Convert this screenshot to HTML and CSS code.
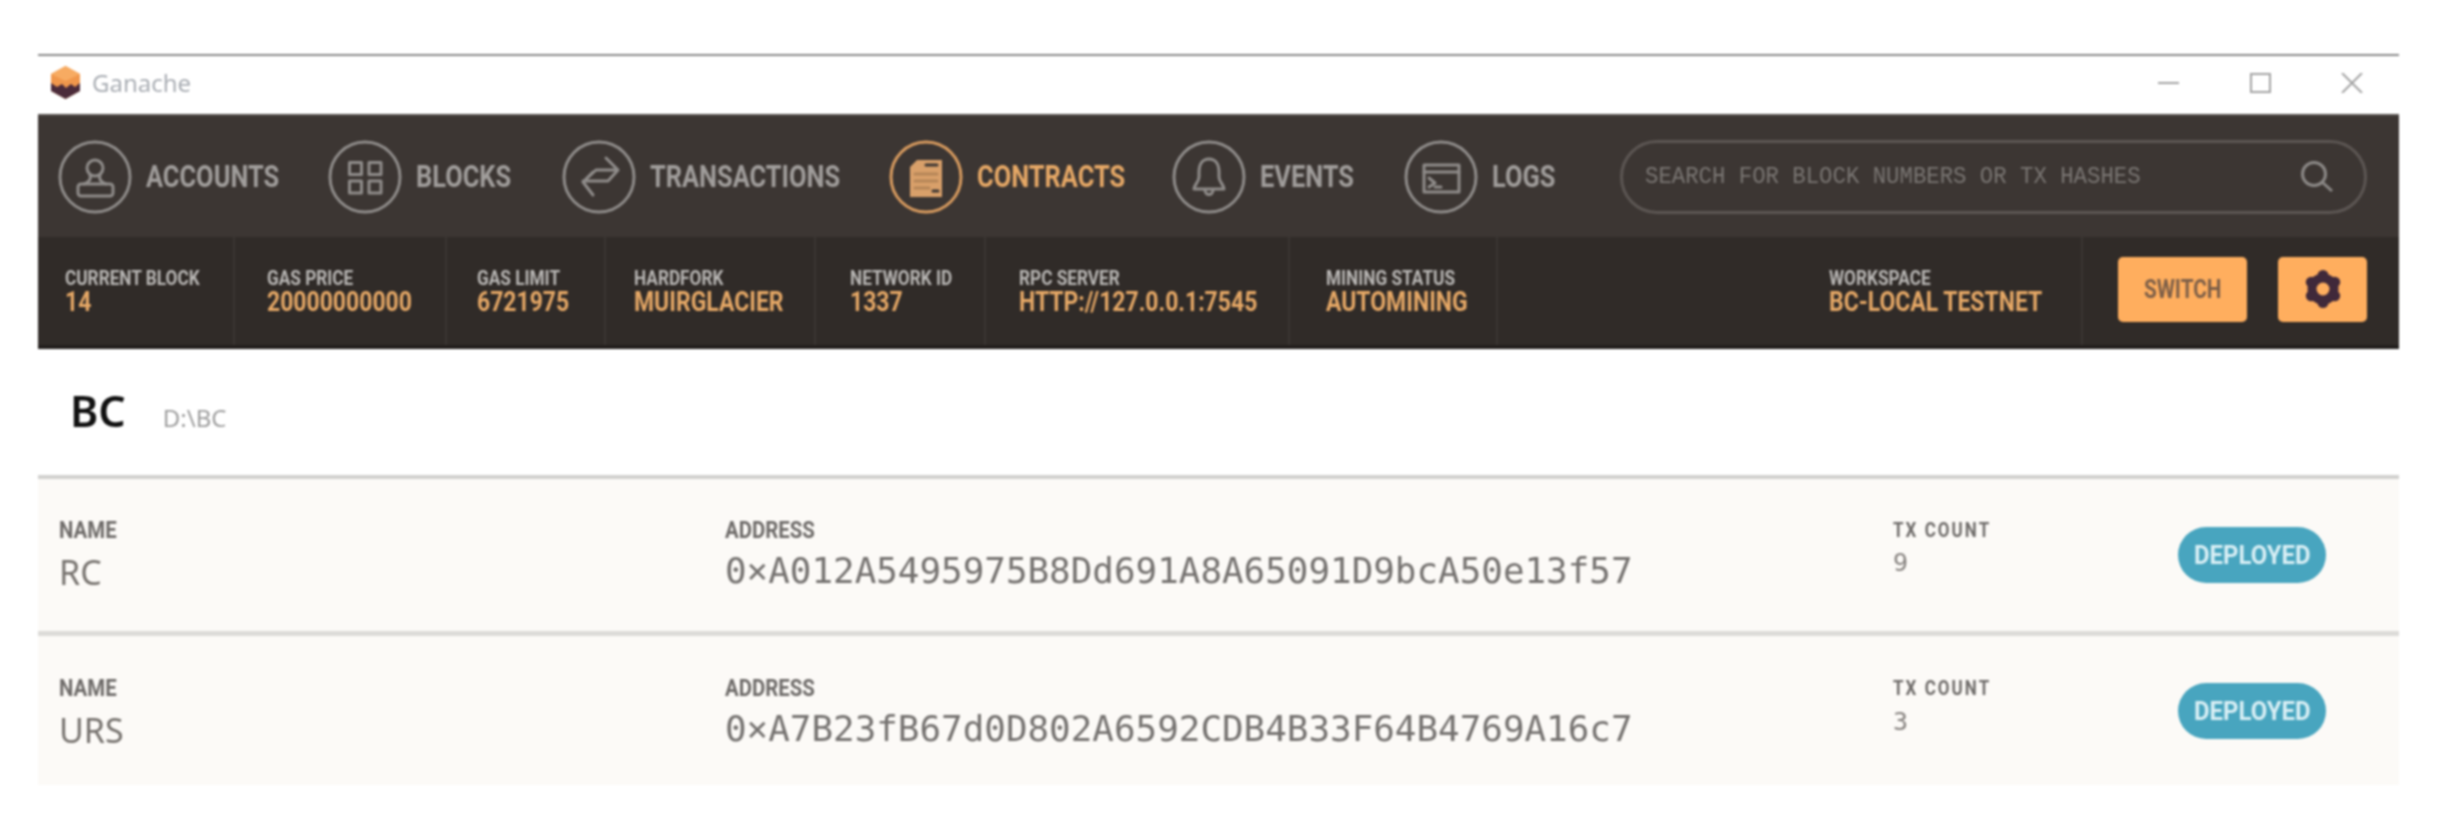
FILE: index.html
```html
<!DOCTYPE html>
<html lang="en">
<head>
    <meta charset="UTF-8">
    <title>Ganache</title>
    <link rel="stylesheet" href="styles.css">
</head>
<body>
    <div class="window">
        <div class="titlebar">
            <svg class="logo" viewBox="0 0 29 33">
                <path d="M14.5 0 L29 8 V25 L14.5 33 L0 25 V8 Z" fill="#f0974c"/>
                <path d="M14.5 0 L29 8 L14.5 15 L0 8 Z" fill="#f7ab62"/>
                <path d="M0 17 L6 21 L11 18 L15 22 L20 18 L24 21 L29 17 V25 L14.5 33 L0 25 Z" fill="#4b2b3a"/>
            </svg>
            <span class="app-name">Ganache</span>
            <div class="win-controls">
                <svg viewBox="0 0 22 20"><path d="M0 10 H21"/></svg>
                <svg viewBox="0 0 22 20"><rect x="1" y="1" width="19" height="18"/></svg>
                <svg viewBox="0 0 22 20"><path d="M1 0 L21 20 M21 0 L1 20"/></svg>
            </div>
        </div>

        <nav class="nav">
            <a class="nav-item accounts">
                <svg class="nav-icon" viewBox="0 0 74 74">
                    <circle cx="37" cy="37" r="35"/>
                    <circle cx="37" cy="28" r="8"/>
                    <rect x="20" y="44" width="35" height="12" rx="3"/>
                    <path d="M32 35 Q34 41 26 44 M42 35 Q40 41 48 44"/>
                </svg>
                <span>ACCOUNTS</span>
            </a>
            <a class="nav-item blocks">
                <svg class="nav-icon" viewBox="0 0 74 74">
                    <circle cx="37" cy="37" r="35"/>
                    <rect x="21.5" y="22.5" width="12" height="12"/>
                    <rect x="41" y="22.5" width="12" height="12"/>
                    <rect x="21.5" y="41" width="12" height="12"/>
                    <rect x="41" y="41" width="12" height="12"/>
                </svg>
                <span>BLOCKS</span>
            </a>
            <a class="nav-item transactions">
                <svg class="nav-icon" viewBox="0 0 74 74">
                    <circle cx="37" cy="37" r="35"/>
                    <path d="M44 18 L56 30 L46 41 H21 M34 30 H56 M34 30 L21 42 M31 32 L21 42 L31 55"/>
                </svg>
                <span>TRANSACTIONS</span>
            </a>
            <a class="nav-item contracts active">
                <svg class="nav-icon" viewBox="0 0 74 74">
                    <circle cx="37" cy="37" r="35"/>
                    <path class="solid" d="M28 20 H53 V57 H21 V27 Z"/>
                    <path class="ink" d="M37 25 H48"/>
                    <path class="ink faint" d="M26 34 H48 M26 41 H48 M26 48 H40"/>
                    <path class="ink" d="M44 51 H49"/>
                </svg>
                <span>CONTRACTS</span>
            </a>
            <a class="nav-item events">
                <svg class="nav-icon" viewBox="0 0 74 74">
                    <circle cx="37" cy="37" r="35"/>
                    <path d="M37 19 C30 19 27 25 27 32 V37 C27 42 22 45 22 49 H52 C52 45 47 42 47 37 V32 C47 25 44 19 37 19 Z M33 50 C33 56 41 56 41 50"/>
                </svg>
                <span>EVENTS</span>
            </a>
            <a class="nav-item logs">
                <svg class="nav-icon" viewBox="0 0 74 74">
                    <circle cx="37" cy="37" r="35"/>
                    <rect x="20" y="25" width="35" height="27"/>
                    <path d="M20 32 H55 M25 38 L31 43 L25 47 M31 47 H37"/>
                </svg>
                <span>LOGS</span>
            </a>
            <div class="search">
                <span class="search-text">SEARCH FOR BLOCK NUMBERS OR TX HASHES</span>
                <svg class="search-icon" viewBox="0 0 34 32">
                    <circle cx="14" cy="13" r="11.5"/>
                    <path d="M22 21 L32 30"/>
                </svg>
            </div>
        </nav>

        <div class="stats">
            <div class="stat"><label>CURRENT BLOCK</label><b>14</b></div>
            <div class="stat"><label>GAS PRICE</label><b>20000000000</b></div>
            <div class="stat"><label>GAS LIMIT</label><b>6721975</b></div>
            <div class="stat"><label>HARDFORK</label><b>MUIRGLACIER</b></div>
            <div class="stat"><label>NETWORK ID</label><b>1337</b></div>
            <div class="stat"><label>RPC SERVER</label><b>HTTP://127.0.0.1:7545</b></div>
            <div class="stat"><label>MINING STATUS</label><b>AUTOMINING</b></div>
            <div class="stat workspace"><label>WORKSPACE</label><b>BC-LOCAL TESTNET</b></div>
            <div class="stat-actions">
                <button class="btn switch"><span>SWITCH</span></button>
                <button class="btn gear">
                    <svg viewBox="0 0 36 38">
                        <circle class="ring" cx="18" cy="19" r="11"/>
                        <circle cx="18" cy="5.5" r="5.5"/>
                        <circle cx="18" cy="32.5" r="5.5"/>
                        <circle cx="6.3" cy="12.2" r="5.5"/>
                        <circle cx="29.7" cy="12.2" r="5.5"/>
                        <circle cx="6.3" cy="25.8" r="5.5"/>
                        <circle cx="29.7" cy="25.8" r="5.5"/>
                    </svg>
                </button>
            </div>
        </div>

        <div class="heading">
            <h1>BC</h1>
            <span class="path">D:\BC</span>
        </div>

        <div class="contract">
            <div><div class="lbl">NAME</div><div class="name">RC</div></div>
            <div><div class="lbl">ADDRESS</div><div class="addr">0×A012A5495975B8Dd691A8A65091D9bcA50e13f57</div></div>
            <div><div class="lbl tx">TX COUNT</div><div class="count">9</div></div>
            <div class="pill"><span>DEPLOYED</span></div>
        </div>
        <div class="contract">
            <div><div class="lbl">NAME</div><div class="name">URS</div></div>
            <div><div class="lbl">ADDRESS</div><div class="addr">0×A7B23fB67d0D802A6592CDB4B33F64B4769A16c7</div></div>
            <div><div class="lbl tx">TX COUNT</div><div class="count">3</div></div>
            <div class="pill"><span>DEPLOYED</span></div>
        </div>
    </div>
</body>
</html>
```

FILE: styles.css
```css
* {
    box-sizing: border-box;
}
html, body {
    margin: 0;
    padding: 0;
    background: #fff;
}
body {
    height: 827px;
    overflow: hidden;
    font-family: "Roboto", sans-serif;
}
.window {
    margin: 54px 40px 0 38px;
    border-top: 2px solid #8a8a8a;
    filter: blur(0.8px);
}
.titlebar {
    display: flex;
    align-items: center;
    height: 58px;
    padding: 0 36px 5px 13px;
}
.logo {
    width: 29px;
    height: 33px;
}
.app-name {
    margin-left: 12px;
    font-family: "Noto Sans", sans-serif;
    font-size: 24px;
    color: #a9adb3;
}
.win-controls {
    margin-left: auto;
    display: flex;
    gap: 69.5px;
}
.win-controls svg {
    width: 22px;
    height: 20px;
    fill: none;
    stroke: #a3a3a3;
    stroke-width: 2;
}
.nav {
    display: flex;
    align-items: center;
    gap: 50px;
    height: 123px;
    padding: 0 32px 0 20px;
    background: #3c3633;
    border-top: 2px solid #55504d;
}
.nav-item {
    display: flex;
    align-items: center;
    gap: 14px;
    font-size: 31px;
    font-weight: bold;
    color: #a09d9b;
}
/* the app font is narrower than Roboto, so the labels get squeezed */
.nav-item span {
    display: inline-block;
    white-space: nowrap;
    transform: scaleX(0.82);
    transform-origin: left;
}
.accounts span { width: 132px; }
.blocks span { width: 96px; }
.transactions span { width: 189px; }
.contracts span { width: 145px; }
.events span { width: 94px; }
.logs span { width: 64px; }
.nav-item.active {
    color: #e6a866;
}
.nav-icon {
    width: 74px;
    height: 74px;
    flex: none;
    fill: none;
    stroke: #8f8c8a;
    stroke-width: 3;
    stroke-linejoin: round;
    stroke-linecap: round;
}
.active .nav-icon {
    stroke: #d89b5f;
}
.nav-icon .solid {
    fill: #d9a06a;
    stroke: none;
}
.nav-icon .ink {
    stroke: #3c3633;
}
.nav-icon .faint {
    stroke: #b58557;
}
.search {
    flex: 1;
    display: flex;
    align-items: center;
    justify-content: space-between;
    height: 74px;
    margin-left: 14px;
    padding: 0 30px 0 22px;
    border: 3px solid #5c5653;
    border-radius: 37px;
}
.search-text {
    font-family: "Liberation Mono", monospace;
    font-size: 24px;
    white-space: nowrap;
    transform: scaleX(0.93);
    transform-origin: left;
    color: #7a7673;
}
.search-icon {
    width: 34px;
    height: 32px;
    fill: none;
    stroke: #8b8886;
    stroke-width: 3;
}
.stats {
    display: grid;
    grid-template-columns: 197px 212px 159px 210px 170px 304px 208px 585px 1fr;
    height: 112px;
    background: #302b28;
    border-bottom: 4px solid #231f1d;
}
.stat {
    display: flex;
    flex-direction: column;
    padding: 30px 0 0 32px;
    border-right: 2px solid #3a3532;
}
.stat:nth-child(1) { padding-left: 27px; }
.stat:nth-child(3) { padding-left: 30px; }
.stat:nth-child(4) { padding-left: 28px; }
.stat:nth-child(5) { padding-left: 34px; }
.stat:nth-child(6) { padding-left: 33px; }
.stat:nth-child(7) { padding-left: 36px; }
.stat.workspace {
    padding-left: 331px;
}
.stat label, .stat b {
    white-space: nowrap;
    transform: scaleX(0.82);
    transform-origin: left;
}
.stat label {
    font-size: 21px;
    line-height: 22px;
    font-weight: bold;
    color: #b9b7b5;
}
.stat b {
    font-size: 28px;
    line-height: 26px;
    color: #e6a866;
}
.stat-actions {
    display: flex;
    align-items: center;
    justify-content: flex-end;
    gap: 31px;
    padding: 0 32px 4px 0;
}
.btn {
    height: 65px;
    border: none;
    border-radius: 5px;
    background: #ffae5e;
    padding: 0;
}
.switch {
    width: 129px;
    font-family: inherit;
    font-size: 25px;
    font-weight: bold;
    color: #7d5f48;
}
.switch span {
    display: inline-block;
    transform: scaleX(0.83);
}
.gear {
    display: flex;
    align-items: center;
    justify-content: center;
    width: 89px;
}
.gear svg {
    width: 36px;
    height: 38px;
    fill: #40293a;
}
.gear .ring {
    fill: none;
    stroke: #40293a;
    stroke-width: 9;
}
.heading {
    display: flex;
    align-items: baseline;
    gap: 37px;
    height: 126px;
    padding: 32px 0 0 32px;
}
.heading h1 {
    margin: 0;
    font-family: "Noto Sans", sans-serif;
    font-size: 43px;
    font-weight: 600;
    color: #111;
}
.path {
    font-family: "Noto Sans", sans-serif;
    font-size: 24px;
    color: #9d9d9d;
}
.contract {
    display: grid;
    grid-template-columns: 666px 1168px 285px auto;
    height: 156px;
    padding: 37px 0 0 21px;
    background: #fcfaf7;
    border-top: 4px solid #d2d1cf;
}
.contract + .contract {
    height: 154px;
    padding-top: 38px;
    border-top: 5px solid #dcdbd8;
}
.lbl {
    font-size: 24px;
    line-height: 28px;
    font-weight: bold;
    color: #6e6b69;
    white-space: nowrap;
    transform: scaleX(0.85);
    transform-origin: left;
}
.lbl.tx {
    font-size: 20px;
    letter-spacing: 2.4px;
}
.name {
    margin-top: 5px;
    font-family: "Noto Sans", sans-serif;
    font-size: 34px;
    color: #77736f;
}
.addr {
    margin-top: 6px;
    font-family: "DejaVu Sans Mono", monospace;
    font-size: 35.9px;
    color: #757270;
}
.count {
    margin-top: 4px;
    font-family: "DejaVu Sans Mono", monospace;
    font-size: 25px;
    color: #86827f;
}
.contract + .contract .count {
    margin-top: 5px;
}
.pill {
    display: flex;
    align-items: center;
    justify-content: center;
    width: 148px;
    height: 56px;
    margin-top: 11px;
    border-radius: 28px;
    background: #48a5bf;
    font-size: 26px;
    font-weight: bold;
    color: #d9eff5;
}
.contract + .contract .pill {
    margin-top: 9px;
}
.pill span {
    transform: scaleX(0.92);
}
```
